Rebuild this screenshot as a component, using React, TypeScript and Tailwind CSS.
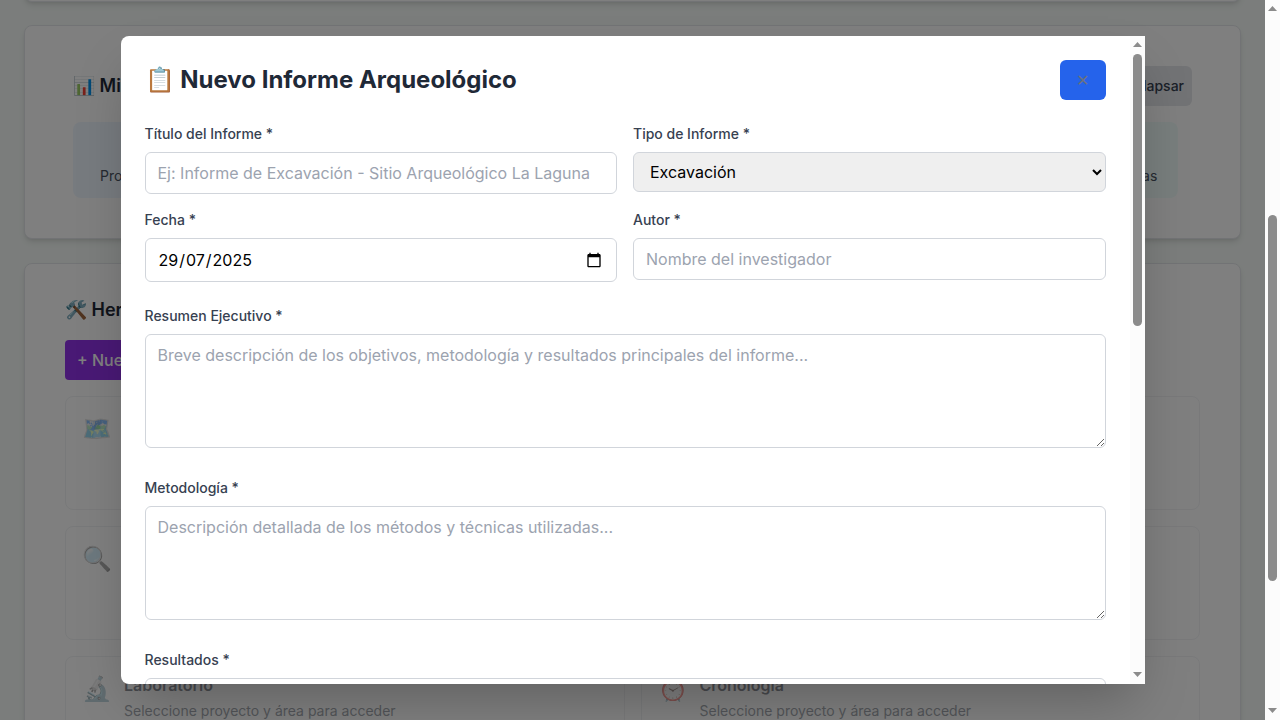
import type { ReactNode } from 'react';

const tools = [
  { icon: '🗺️', title: 'Mapa' },
  { icon: '📐', title: 'Medición' },
  { icon: '🔍', title: 'Prospección' },
  { icon: '📷', title: 'Fotografía' },
  { icon: '🔬', title: 'Laboratorio' },
  { icon: '⏰', title: 'Cronología' },
];

const stats = [
  { value: 3, label: 'Proyectos', style: 'w-[120px] bg-[#eff6ff]' },
  { value: 5, label: 'Áreas', style: 'w-[120px] bg-[#f0fdf4]' },
  { value: 8, label: 'Hallazgos', style: 'w-[120px] bg-[#faf5ff]' },
  { value: 2, label: 'Muestras', style: 'w-[103px] bg-[#f0fdfa]' },
];

const fieldClass =
  'w-full rounded-md border border-[#d1d5db] px-3 py-2 text-base text-black placeholder:text-[#9ca3af] outline-none';

function Scrollbar({ thumb }: { thumb: string }) {
  return (
    <div className="flex w-[15px] shrink-0 flex-col items-center bg-[#fcfcfc]">
      <svg className="mt-[6px]" width="9" height="5" viewBox="0 0 9 5">
        <path d="M4.5 0L9 5H0Z" fill="#8b8b8b" />
      </svg>
      <div className={`w-[9px] rounded-full bg-[#8b8b8b] ${thumb}`} />
      <svg className="mt-auto mb-[7px]" width="9" height="5" viewBox="0 0 9 5">
        <path d="M0 0H9L4.5 5Z" fill="#8b8b8b" />
      </svg>
    </div>
  );
}

function Field({ label, children }: { label: string; children: ReactNode }) {
  return (
    <div>
      <label className="mb-2 block text-sm font-medium text-[#374151]">{label}</label>
      {children}
    </div>
  );
}

function DateField() {
  return (
    <div className="flex h-11 items-center justify-between rounded-md border border-[#d1d5db] pr-[14px] pl-3 text-base text-black">
      <div className="flex">
        <span className="px-px">29</span>
        <span>/</span>
        <span className="px-px">07</span>
        <span>/</span>
        <span className="px-px">2025</span>
      </div>
      <svg width="16" height="16" viewBox="0 0 24 24" fill="black">
        <path d="M20 3h-1V1h-2v2H7V1H5v2H4c-1.1 0-2 .9-2 2v16c0 1.1.9 2 2 2h16c1.1 0 2-.9 2-2V5c0-1.1-.9-2-2-2zm0 18H4V8h16v13z" />
      </svg>
    </div>
  );
}

function ReportDialog() {
  return (
    <div className="flex h-[648px] w-full max-w-5xl overflow-hidden rounded-l-lg bg-white shadow-2xl">
      <div className="h-full min-w-0 flex-1 overflow-hidden p-6">
        <div className="mb-6 flex items-center justify-between">
          <h2 className="text-2xl font-bold text-[#1f2937]">📋 Nuevo Informe Arqueológico</h2>
          <button className="h-10 w-[46px] rounded-md bg-[#2563eb] text-base font-medium text-[#6b7280]">
            ✕
          </button>
        </div>
        <div className="space-y-6">
          <div className="grid grid-cols-2 gap-4">
            <Field label="Título del Informe *">
              <input
                className={fieldClass}
                placeholder="Ej: Informe de Excavación - Sitio Arqueológico La Laguna"
              />
            </Field>
            <Field label="Tipo de Informe *">
              <select className="h-10 w-full rounded-md border border-[#d1d5db] bg-[#efefef] px-3 py-2 text-base text-black">
                <option>Excavación</option>
              </select>
            </Field>
            <Field label="Fecha *">
              <DateField />
            </Field>
            <Field label="Autor *">
              <input className={fieldClass} placeholder="Nombre del investigador" />
            </Field>
          </div>
          <Field label="Resumen Ejecutivo *">
            <textarea
              rows={4}
              className={fieldClass}
              placeholder="Breve descripción de los objetivos, metodología y resultados principales del informe..."
            />
          </Field>
          <Field label="Metodología *">
            <textarea
              rows={4}
              className={fieldClass}
              placeholder="Descripción detallada de los métodos y técnicas utilizadas..."
            />
          </Field>
          <Field label="Resultados *">
            <textarea rows={4} className={fieldClass} />
          </Field>
        </div>
      </div>
      <Scrollbar thumb="mt-[7px] h-[272px]" />
    </div>
  );
}

function Dashboard() {
  return (
    <div className="flex h-full flex-col overflow-hidden bg-[#f6fbf8] px-6">
      <div className="-mt-10 h-[42px] shrink-0 rounded-lg border border-[#e5e7eb] bg-white shadow-md" />
      <section className="mt-[23px] h-[214px] shrink-0 rounded-lg border border-[#e5e7eb] bg-white px-12 pt-10 shadow-md">
        <div className="mb-4 flex items-center justify-between">
          <h3 className="text-lg font-semibold text-[#1f2937]">📊 Mi Progreso</h3>
          <button className="h-10 rounded-md bg-[#e5e7eb] px-2 text-sm font-medium text-[#374151]">
            Colapsar
          </button>
        </div>
        <div className="flex justify-between pr-[14px]">
          {stats.map((stat) => (
            <div key={stat.label} className={`rounded-lg p-3 text-center ${stat.style}`}>
              <div className="text-2xl font-bold text-[#1f2937]">{stat.value}</div>
              <div className="text-sm text-[#4b5563]">{stat.label}</div>
            </div>
          ))}
        </div>
      </section>
      <section className="mt-6 h-[620px] shrink-0 rounded-lg border border-[#e5e7eb] bg-white px-10 pt-8 shadow-md">
        <h3 className="mb-4 text-lg font-semibold text-[#1f2937]">🛠️ Herramientas</h3>
        <button className="mb-4 h-10 rounded bg-[#9333ea] px-3 text-base font-medium text-white">
          + Nuevo
        </button>
        <div className="grid grid-cols-2 gap-4">
          {tools.map((tool) => (
            <div
              key={tool.title}
              className="flex h-[114px] items-start gap-3 rounded-lg border border-[#e5e7eb] p-4 opacity-50"
            >
              <span className="text-2xl">{tool.icon}</span>
              <div>
                <div className="text-base font-semibold text-[#1f2937]">{tool.title}</div>
                <div className="mt-1 text-sm text-[#4b5563]">
                  Seleccione proyecto y área para acceder
                </div>
              </div>
            </div>
          ))}
        </div>
      </section>
    </div>
  );
}

export default function App() {
  return (
    <div className="flex h-[720px] w-[1280px] overflow-hidden font-['Inter',sans-serif]">
      <main className="relative h-full w-[1265px] overflow-hidden">
        <Dashboard />
        <div className="absolute inset-0 flex items-center justify-center bg-black/50 p-4">
          <ReportDialog />
        </div>
      </main>
      <Scrollbar thumb="mt-[204px] h-[366px]" />
    </div>
  );
}
